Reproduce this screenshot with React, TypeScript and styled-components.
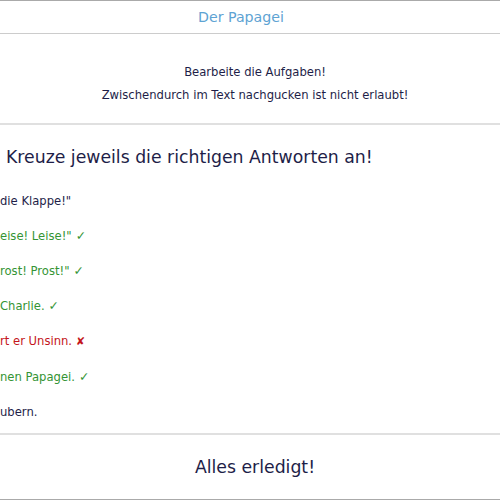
import React from "react";
import styled, { createGlobalStyle } from "styled-components";

const Global = createGlobalStyle`
  html, body { margin: 0; padding: 0; background: #fff; }
  body { font-family: "DejaVu Sans", Verdana, sans-serif; color: #1e1e48; }
  #root { width: 500px; height: 500px; overflow: hidden; }
`;

const Page = styled.div`
  width: 500px;
  height: 500px;
  display: flex;
  flex-direction: column;
  border-top: 1px solid #aaaaaa;
  border-bottom: 1px solid #aaaaaa;
  box-sizing: border-box;
`;

const TitleBar = styled.div`
  height: 32px;
  display: flex;
  align-items: center;
  justify-content: center;
  padding-right: 18px;
  border-bottom: 1px solid #cccccc;
  font-size: 14.2px;
  color: #5ea3d3;
`;

const Intro = styled.div`
  height: 91px;
  display: flex;
  flex-direction: column;
  align-items: center;
  justify-content: center;
  gap: 9px;
  padding: 10px 0 0 10px;
  box-sizing: border-box;
  border-bottom: 2px solid #e0e0e0;
  font-size: 11.6px;
  line-height: 14px;
`;

const Task = styled.div`
  flex: 1;
  display: flex;
  flex-direction: column;
  border-bottom: 2px solid #e0e0e0;
`;

const Heading = styled.h2`
  margin: 22px 0 26px 6px;
  font-weight: normal;
  font-size: 17.3px;
  line-height: 20px;
`;

const Answers = styled.ul`
  list-style: none;
  margin: 0;
  padding: 0;
  display: flex;
  flex-direction: column;
  gap: 19px;
`;

const Answer = styled.li<{ $state?: "ok" | "bad" }>`
  font-size: 11.6px;
  line-height: 16px;
  color: ${(p) => (p.$state === "ok" ? "#349434" : p.$state === "bad" ? "#c4161c" : "#1e1e48")};
`;

const Mark = styled.span<{ $bad?: boolean }>`
  margin-left: 4px;
  font-weight: ${(p) => (p.$bad ? "bold" : "normal")};
  font-size: ${(p) => (p.$bad ? "11px" : "12.5px")};
`;

const Done = styled.div`
  height: 64px;
  display: flex;
  align-items: center;
  justify-content: center;
  padding-left: 10px;
  font-size: 17.3px;
`;

const items: { text: string; state?: "ok" | "bad" }[] = [
  { text: "die Klappe!\"" },
  { text: "eise! Leise!\"", state: "ok" },
  { text: "rost! Prost!\"", state: "ok" },
  { text: "Charlie.", state: "ok" },
  { text: "rt er Unsinn.", state: "bad" },
  { text: "nen Papagei.", state: "ok" },
  { text: "ubern." },
];

export default function App() {
  return (
    <>
      <Global />
      <Page>
        <TitleBar>Der Papagei</TitleBar>
        <Intro>
          <div>Bearbeite die Aufgaben!</div>
          <div>Zwischendurch im Text nachgucken ist nicht erlaubt!</div>
        </Intro>
        <Task>
          <Heading>Kreuze jeweils die richtigen Antworten an!</Heading>
          <Answers>
            {items.map((it, i) => (
              <Answer key={i} $state={it.state}>
                {it.text}
                {it.state === "ok" && <Mark>✓</Mark>}
                {it.state === "bad" && <Mark $bad>✘</Mark>}
              </Answer>
            ))}
          </Answers>
        </Task>
        <Done>Alles erledigt!</Done>
      </Page>
    </>
  );
}
